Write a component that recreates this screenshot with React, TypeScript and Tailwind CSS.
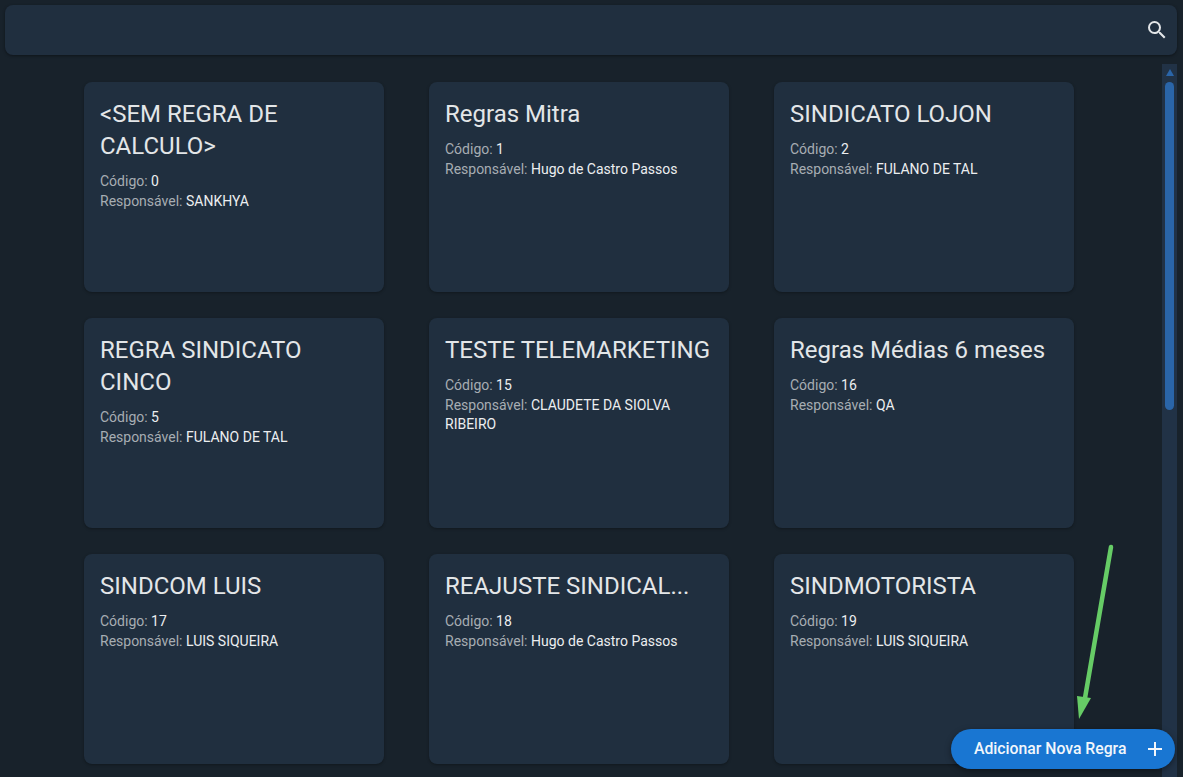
type Rule = {
  name: string
  code: number
  owner: string
}

const RULES: Rule[] = [
  { name: '<SEM REGRA DE CALCULO>', code: 0, owner: 'SANKHYA' },
  { name: 'Regras Mitra', code: 1, owner: 'Hugo de Castro Passos' },
  { name: 'SINDICATO LOJON', code: 2, owner: 'FULANO DE TAL' },
  { name: 'REGRA SINDICATO CINCO', code: 5, owner: 'FULANO DE TAL' },
  { name: 'TESTE TELEMARKETING', code: 15, owner: 'CLAUDETE DA SIOLVA RIBEIRO' },
  { name: 'Regras Médias 6 meses', code: 16, owner: 'QA' },
  { name: 'SINDCOM LUIS', code: 17, owner: 'LUIS SIQUEIRA' },
  { name: 'REAJUSTE SINDICAL...', code: 18, owner: 'Hugo de Castro Passos' },
  { name: 'SINDMOTORISTA', code: 19, owner: 'LUIS SIQUEIRA' },
]

function RuleCard({ rule }: { rule: Rule }) {
  return (
    <div className="h-[210px] rounded-lg bg-[#202f3f] px-4 py-4 shadow-[0_1px_3px_rgba(0,0,0,0.3)]">
      <h2 className="text-[24px] leading-8 text-[#e3e6e8]">{rule.name}</h2>
      <p className="mt-[9px] text-[14px] leading-[20px] text-[#a7adb3]">
        Código: <span className="text-[#eceef0]">{rule.code}</span>
      </p>
      <p className="mt-px text-[14px] leading-[19px] text-[#a7adb3]">
        Responsável: <span className="text-[#eceef0]">{rule.owner}</span>
      </p>
    </div>
  )
}

export default function App() {
  return (
    <div className="relative flex h-[777px] w-[1183px] flex-col overflow-hidden bg-[#18222b] font-['Roboto',sans-serif]">
      <div className="ml-[5px] mr-[6px] mt-[5px] flex h-[50px] items-center justify-end rounded-lg bg-[#202f3f] pr-[8px] shadow-[0_1px_3px_rgba(0,0,0,0.4)]">
        <svg width="24" height="24" viewBox="0 0 24 24" fill="#e3e6e8">
          <path d="M15.5 14h-.79l-.28-.27A6.471 6.471 0 0 0 16 9.5 6.5 6.5 0 1 0 9.5 16c1.61 0 3.09-.59 4.23-1.57l.27.28v.79l5 4.99L20.49 19l-4.99-5zm-6 0C7.01 14 5 11.99 5 9.5S7.01 5 9.5 5 14 7.01 14 9.5 11.99 14 9.5 14z" />
        </svg>
      </div>

      <div className="mt-[9px] flex min-h-0 flex-1 pr-[6px]">
        <div className="min-w-0 flex-1 overflow-hidden pl-[84px] pt-[18px]">
          <div className="grid w-[990px] grid-cols-[300px_300px_300px] gap-x-[45px] gap-y-[26px]">
            {RULES.map((rule) => (
              <RuleCard key={rule.code} rule={rule} />
            ))}
          </div>
        </div>

        <div className="flex w-[15px] flex-col items-center bg-[#213246] pt-[5px]">
          <div className="h-0 w-0 border-x-[4.5px] border-b-[7px] border-x-transparent border-b-[#2a65a8]" />
          <div className="mt-[6px] h-[328px] w-[9px] rounded-full bg-[#2a65a8]" />
        </div>
      </div>

      <svg className="absolute left-[1070px] top-[540px]" width="50" height="185" viewBox="0 0 50 185">
        <path d="M41 7 L15 158" stroke="#66cc66" strokeWidth="4.5" strokeLinecap="round" fill="none" />
        <path d="M7 156 L21 158 L9 179 Z" fill="#66cc66" />
      </svg>

      <button
        type="button"
        className="absolute left-[951px] top-[729px] flex h-10 w-[224px] items-center rounded-full bg-[#1976d2] pl-[23px] pr-[8px] text-[15.75px] font-medium text-[#f2f6fb] shadow-[0_2px_6px_rgba(0,0,0,0.4)]"
      >
        <span className="flex-1 text-left">Adicionar Nova Regra</span>
        <svg width="24" height="24" viewBox="0 0 24 24" fill="#f2f6fb">
          <path d="M19 13h-6v6h-2v-6H5v-2h6V5h2v6h6v2z" />
        </svg>
      </button>
    </div>
  )
}
